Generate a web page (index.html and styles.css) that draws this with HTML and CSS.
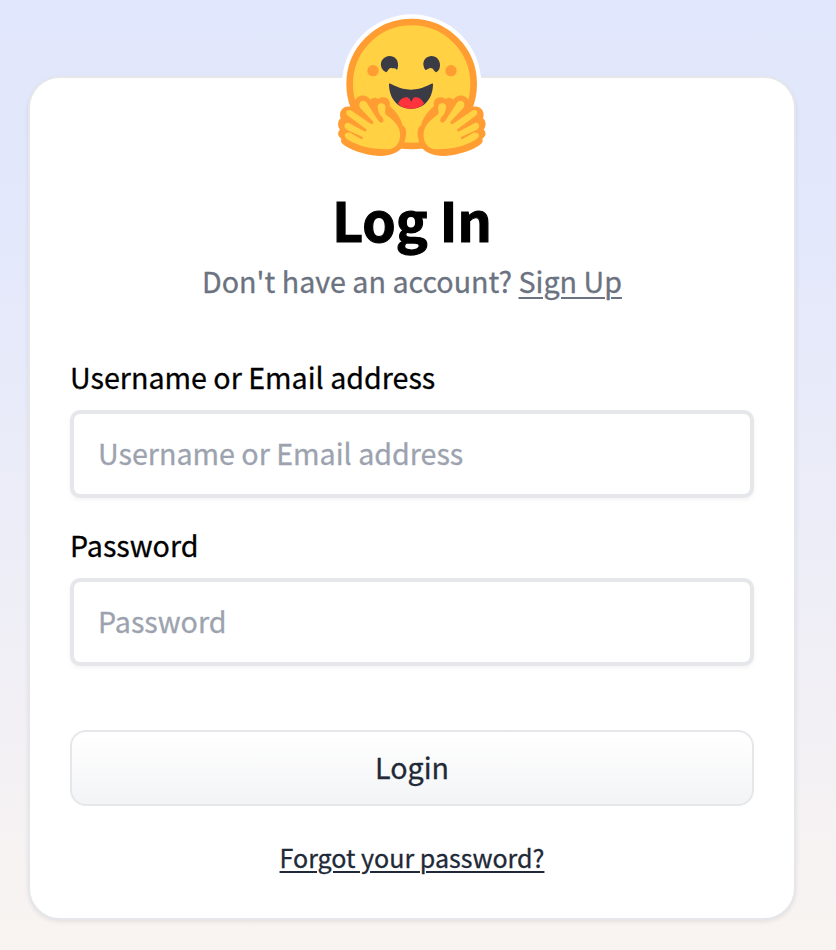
FILE: index.html
```html
<!DOCTYPE html>
<html lang="en">
<head>
<meta charset="utf-8">
<title>Log In</title>
<link rel="stylesheet" href="styles.css">
</head>
<body>
<main class="card">
  <svg class="logo" viewBox="0 0 492 480" aria-hidden="true">
    <defs>
      <g id="hand">
        <path fill="#ff9d33" d="M144 282C160 270 184 278 179 303C199 320 215 344 217 360C233 369 232 397 215 430C197 448 173 453 153 453C119 452 78 441 50 425C35 417 31 410 34 401C23 393 21 382 30 374C21 363 23 347 32 340C25 319 38 300 63 305C71 302 72 297 74 290C80 269 107 264 121 284C128 278 137 276 144 282Z"/>
        <path fill="#ffd143" d="M143 306C141 294 163 290 166 304C168 314 161 325 170 331C190 345 208 361 210 385C212 408 202 427 182 432C150 434 112 431 82 418C64 411 44 402 44 391C45 383 54 381 62 384L93 402Q100 404 98 396L50 374C38 366 44 351 56 354L103 379Q112 381 109 373L55 333C42 323 52 309 66 318L122 356Q132 360 130 350L90 308C82 291 99 280 110 293L144 346Q152 358 159 350Q162 345 157 336C145 327 144 314 143 306Z"/>
      </g>
      <path id="eye" fill="#3a3b45" d="M169 202C148 194 147 165 167 156C187 147 206 162 204 181C204 187 203 191 201 195C195 187 189 192 185 189C176 187 175 197 169 202Z"/>
    </defs>
    <circle cx="245" cy="237" r="209" fill="#fff"/>
    <circle cx="245" cy="237" r="186" fill="#ffd143" stroke="#ff9d33" stroke-width="20"/>
    <g fill="#ff9d33"><circle cx="129" cy="197" r="17"/><circle cx="363" cy="197" r="17"/></g>
    <use href="#eye"/>
    <path fill="#3a3b45" d="M319 202C311 199 310 189 302 189C297 189 294 194 286 195C275 178 280 160 295 155C314 148 331 163 330 181C330 190 326 198 319 202Z"/>
    <path fill="#3a3b45" d="M177 237C178 230 203 254 243 254C283 254 308 230 309 237C309 277 286 311 243 311C200 311 177 277 177 237Z"/>
    <path fill="#ff323d" d="M204 296C211 281 222 275 232 277C238 279 241 285 244 291C247 284 249 279 254 277C265 276 276 282 282 296C272 306 259 311 243 311C227 311 214 306 204 296Z"/>
    <use href="#hand"/>
    <use href="#hand" transform="translate(491 0) scale(-1 1)"/>
  </svg>
  <h1 class="title">Log In</h1>
  <p class="subtitle">Don't have an account? <a href="#">Sign Up</a></p>
  <form class="form">
    <label class="field"><span>Username or Email address</span><input type="text" placeholder="Username or Email address"></label>
    <label class="field"><span>Password</span><input type="password" placeholder="Password"></label>
    <button class="submit" type="button">Login</button>
  </form>
  <a class="forgot" href="#">Forgot your password?</a>
</main>
</body>
</html>
```
FILE: styles.css
```css
* { box-sizing: border-box; }
body {
  margin: 0;
  height: 950px;
  padding: 76px 40px 0 28px;
  overflow: hidden;
  background: linear-gradient(#e1e7fc 0%, #e3e8fb 25%, #f0eff6 68%, #f9f4f1 100%);
  font-family: "Noto Sans CJK SC", "Source Sans Pro", sans-serif;
  font-size: 28.65px;
  -webkit-text-stroke: .3px;
  color: #000;
}
.card {
  display: flex;
  flex-direction: column;
  align-items: center;
  height: 844px;
  padding: 0 40px;
  border: 2px solid #e5e7eb;
  border-radius: 32px;
  background: #fff;
  box-shadow: 0 2px 4px rgba(0, 0, 0, .08);
}
.logo { width: 164px; height: 160px; margin-top: -73px; flex: none; }
.title { margin: 24px 0 0; font-size: 53.5px; line-height: 60px; font-weight: 700; -webkit-text-stroke: 1.2px; }
.subtitle { margin: 12px 0 0; line-height: 40px; color: #6b7280; }
a { color: inherit; text-decoration-thickness: 2px; text-underline-offset: 4px; }
.form { width: 684px; display: flex; flex-direction: column; margin-top: 52px; }
.field { display: flex; flex-direction: column; margin-bottom: 23px; }
.field span { line-height: 48px; height: 57px; }
input {
  height: 88px;
  padding: 0 24px 3px;
  border: 4px solid #e5e7eb;
  border-radius: 10px;
  background: #fff;
  box-shadow: 0 2px 4px rgba(0, 0, 0, .05);
  font: inherit;
  -webkit-text-stroke: .3px;
}
input::placeholder { color: #9ca3af; opacity: 1; }
.submit {
  height: 76px;
  margin-top: 41px;
  padding: 0 0 4px;
  border: 2px solid #e5e7eb;
  border-radius: 16px;
  background: linear-gradient(#fff, #f3f4f6);
  font: inherit;
  color: #1f2937;
}
.forgot { margin-top: 31px; font-size: 25.05px; line-height: 40px; color: #1f2937; text-underline-offset: 3px; }
```
